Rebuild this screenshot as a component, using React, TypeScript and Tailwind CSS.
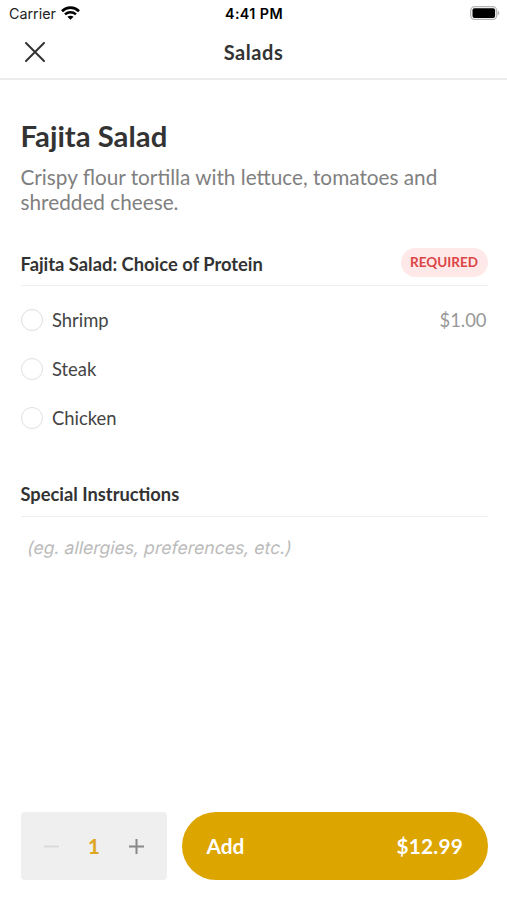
import React, { useState } from "react";

const proteins = [
  { id: "shrimp", name: "Shrimp", price: "$1.00" },
  { id: "steak", name: "Steak", price: "" },
  { id: "chicken", name: "Chicken", price: "" },
];

const StatusBar = () => {
  return (
    <div className="grid h-[27px] grid-cols-3 items-center pl-[9px] pr-[7px] font-['Inter',sans-serif] text-[14.3px] text-black">
      <div className="flex items-center gap-[5px]">
        <span className="text-[#222]">Carrier</span>
        <svg className="-mt-[2px]" width="19" height="14" viewBox="0 0 19 14" fill="none">
          <path d="M1 5.2C5.8 .5 13.2 .5 18 5.2" stroke="#000" strokeWidth="2.7" />
          <path d="M4 8.4C7.2 5.6 11.8 5.6 15 8.4" stroke="#000" strokeWidth="2.5" />
          <path d="M6.4 10.8C8.2 9.3 10.8 9.3 12.6 10.8L9.5 13.8Z" fill="#000" />
        </svg>
      </div>
      <span className="-ml-px text-center text-[14.3px] font-semibold tracking-[0.4px]">4:41 PM</span>
      <svg className="-mt-px justify-self-end" width="30" height="14" viewBox="0 0 30 14">
        <rect x=".7" y=".7" width="26" height="12.8" rx="4" fill="none" stroke="#b5b5b5" strokeWidth="1.3" />
        <rect x="2.5" y="2.3" width="22.6" height="9.6" rx="2" fill="#000" />
        <path d="M27.8 4.8C29.9 5.4 29.9 8.8 27.8 9.4Z" fill="#b5b5b5" />
      </svg>
    </div>
  );
};

const App = () => {
  const [protein, setProtein] = useState("");
  const [count, setCount] = useState(1);

  return (
    <div className="flex h-[900px] w-[507px] flex-col bg-white font-['Lato',sans-serif] text-[#333]">
      <StatusBar />
      <header className="grid h-[53px] grid-cols-[1fr_auto_1fr] items-center border-b-2 border-[#ececec] px-[25px]">
        <button type="button" aria-label="Close" className="-mt-[2px]">
          <svg width="20" height="20" viewBox="0 0 20 20" fill="none">
            <path d="M1 1L19 19M19 1L1 19" stroke="#333" strokeWidth="2" strokeLinecap="round" />
          </svg>
        </button>
        <h1 className="-mt-[2px] text-[20px] font-bold tracking-[0.55px]">Salads</h1>
      </header>

      <main className="flex-1 pr-[19.5px] pl-[20.5px] pt-[38px]">
        <h2 className="text-[29.3px] leading-[36px] font-bold">Fajita Salad</h2>
        <p className="mt-[11px] text-[20.75px] leading-[25px] text-[#808080]">
          Crispy flour tortilla with lettuce, tomatoes and shredded cheese.
        </p>

        <section className="mt-[33px]">
          <div className="flex h-[38px] items-start justify-between border-b border-[#eee]">
            <h3 className="mt-[4px] text-[18.35px] leading-[24px] font-bold">
              Fajita Salad: Choice of Protein
            </h3>
            <span className="rounded-full bg-[#fee8e8] px-[9.5px] text-[13.5px] leading-[29px] font-bold text-[#dc4545]">
              REQUIRED
            </span>
          </div>
          <div className="pt-[10px]">
            {proteins.map((item) => (
              <button
                key={item.id}
                type="button"
                onClick={() => setProtein(item.id)}
                className="flex h-[49px] w-full items-center text-[18.4px]"
              >
                <span
                  className={`-mt-[2px] h-[22px] w-[22px] rounded-full border-[1.5px] ${
                    protein === item.id ? "border-[#dda500] bg-[#dda500]" : "border-[#e0e0e0]"
                  }`}
                />
                <span className="ml-[9.5px] text-[#444]">{item.name}</span>
                <span className="ml-auto pr-px text-[#999]">{item.price}</span>
              </button>
            ))}
          </div>
        </section>

        <section className="mt-[37px]">
          <h3 className="h-[37px] border-b border-[#eee] text-[18.3px] leading-[28px] font-bold">
            Special Instructions
          </h3>
          <input
            type="text"
            placeholder="(eg. allergies, preferences, etc.)"
            className="mt-[17px] block w-full -skew-x-12 px-[6.5px] font-['Inter',sans-serif] text-[17.6px] leading-[28px] outline-none placeholder:text-[#bbb]"
          />
        </section>
      </main>

      <footer className="flex h-[108px] items-start gap-[15px] pr-[19.5px] pl-[20.5px] pt-[20px]">
        <div className="flex h-[68px] w-[146.5px] items-center justify-between rounded-[4px] bg-[#efefef] px-[22px]">
          <button type="button" aria-label="Remove one" onClick={() => setCount(Math.max(1, count - 1))}>
            <svg width="17" height="17" viewBox="0 0 17 17">
              <path d="M1 8.5H16" stroke="#dadada" strokeWidth="2" />
            </svg>
          </button>
          <span className="text-[21px] font-bold text-[#dda520]">{count}</span>
          <button type="button" aria-label="Add one" onClick={() => setCount(count + 1)}>
            <svg width="17" height="17" viewBox="0 0 17 17">
              <path d="M1 8.5H16M8.5 1V16" stroke="#888" strokeWidth="2" />
            </svg>
          </button>
        </div>
        <button
          type="button"
          className="flex h-[68px] flex-1 items-center justify-between rounded-full bg-[#dda500] px-[24.5px] text-[20.8px] font-bold text-white"
        >
          <span>Add</span>
          <span className="tracking-[0.2px]">$12.99</span>
        </button>
      </footer>
    </div>
  );
};

export default App;
